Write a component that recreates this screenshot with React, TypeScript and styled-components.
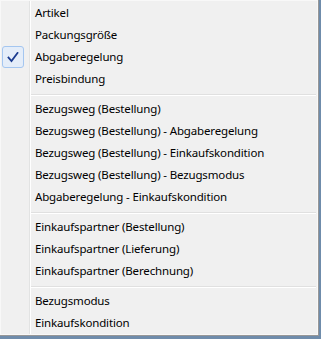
import React from 'react'
import styled, { createGlobalStyle } from 'styled-components'

const GlobalStyle = createGlobalStyle`
  html, body {
    margin: 0;
    padding: 0;
    background: #6f8cab;
    overflow: hidden;
  }
`

type Entry = { label: string; checked?: boolean } | 'sep'

const entries: Entry[] = [
  { label: 'Artikel' },
  { label: 'Packungsgröße' },
  { label: 'Abgaberegelung', checked: true },
  { label: 'Preisbindung' },
  'sep',
  { label: 'Bezugsweg (Bestellung)' },
  { label: 'Bezugsweg (Bestellung) - Abgaberegelung' },
  { label: 'Bezugsweg (Bestellung) - Einkaufskondition' },
  { label: 'Bezugsweg (Bestellung) - Bezugsmodus' },
  { label: 'Abgaberegelung - Einkaufskondition' },
  'sep',
  { label: 'Einkaufspartner (Bestellung)' },
  { label: 'Einkaufspartner (Lieferung)' },
  { label: 'Einkaufspartner (Berechnung)' },
  'sep',
  { label: 'Bezugsmodus' },
  { label: 'Einkaufskondition' },
]

const Menu = styled.div`
  margin: -1px 0 0 -1px;
  width: 320px;
  height: 337px;
  box-sizing: border-box;
  border: 1px solid #979797;
  box-shadow: inset 0 0 0 1px #f8f8f8;
  background:
    linear-gradient(
      to right,
      transparent 29px,
      #e2e3e3 29px,
      #e2e3e3 30px,
      #ffffff 30px,
      #ffffff 31px,
      transparent 31px
    ),
    #f0f0f0;
  padding: 2px 0 1px 0;
  display: flex;
  flex-direction: column;
  font-family: 'Noto Sans', 'Open Sans', sans-serif;
  font-size: 11.5px;
  letter-spacing: -0.15px;
  color: #000;
`

const Item = styled.div`
  height: 22px;
  display: flex;
  align-items: center;
`

const Gutter = styled.div<{ $checked?: boolean }>`
  width: 22px;
  height: 22px;
  margin: 0 11px 0 2px;
  box-sizing: border-box;
  display: flex;
  align-items: center;
  justify-content: center;
  border-radius: 3px;
  border: 1px solid ${(p) => (p.$checked ? '#a4c6f0' : 'transparent')};
  background: ${(p) => (p.$checked ? '#e4edf9' : 'transparent')};
`

const Label = styled.span`
  white-space: nowrap;
  line-height: 22px;
`

const Separator = styled.div`
  height: 2px;
  margin: 4px 2px 2px 31px;
  border-top: 1px solid #e0e0e0;
  border-bottom: 1px solid #ffffff;
  box-sizing: border-box;
`

const CheckIcon = () => (
  <svg width="12" height="11" viewBox="0 0 12 11">
    <path d="M1.5 5.5 L4.5 9 L10.5 1" fill="none" stroke="#1a3a8f" strokeWidth="1.8" strokeLinecap="square" />
  </svg>
)

export default function App() {
  return (
    <>
      <GlobalStyle />
      <Menu>
        {entries.map((e, i) =>
          e === 'sep' ? (
            <Separator key={i} />
          ) : (
            <Item key={i}>
              <Gutter $checked={e.checked}>{e.checked && <CheckIcon />}</Gutter>
              <Label>{e.label}</Label>
            </Item>
          ),
        )}
      </Menu>
    </>
  )
}
